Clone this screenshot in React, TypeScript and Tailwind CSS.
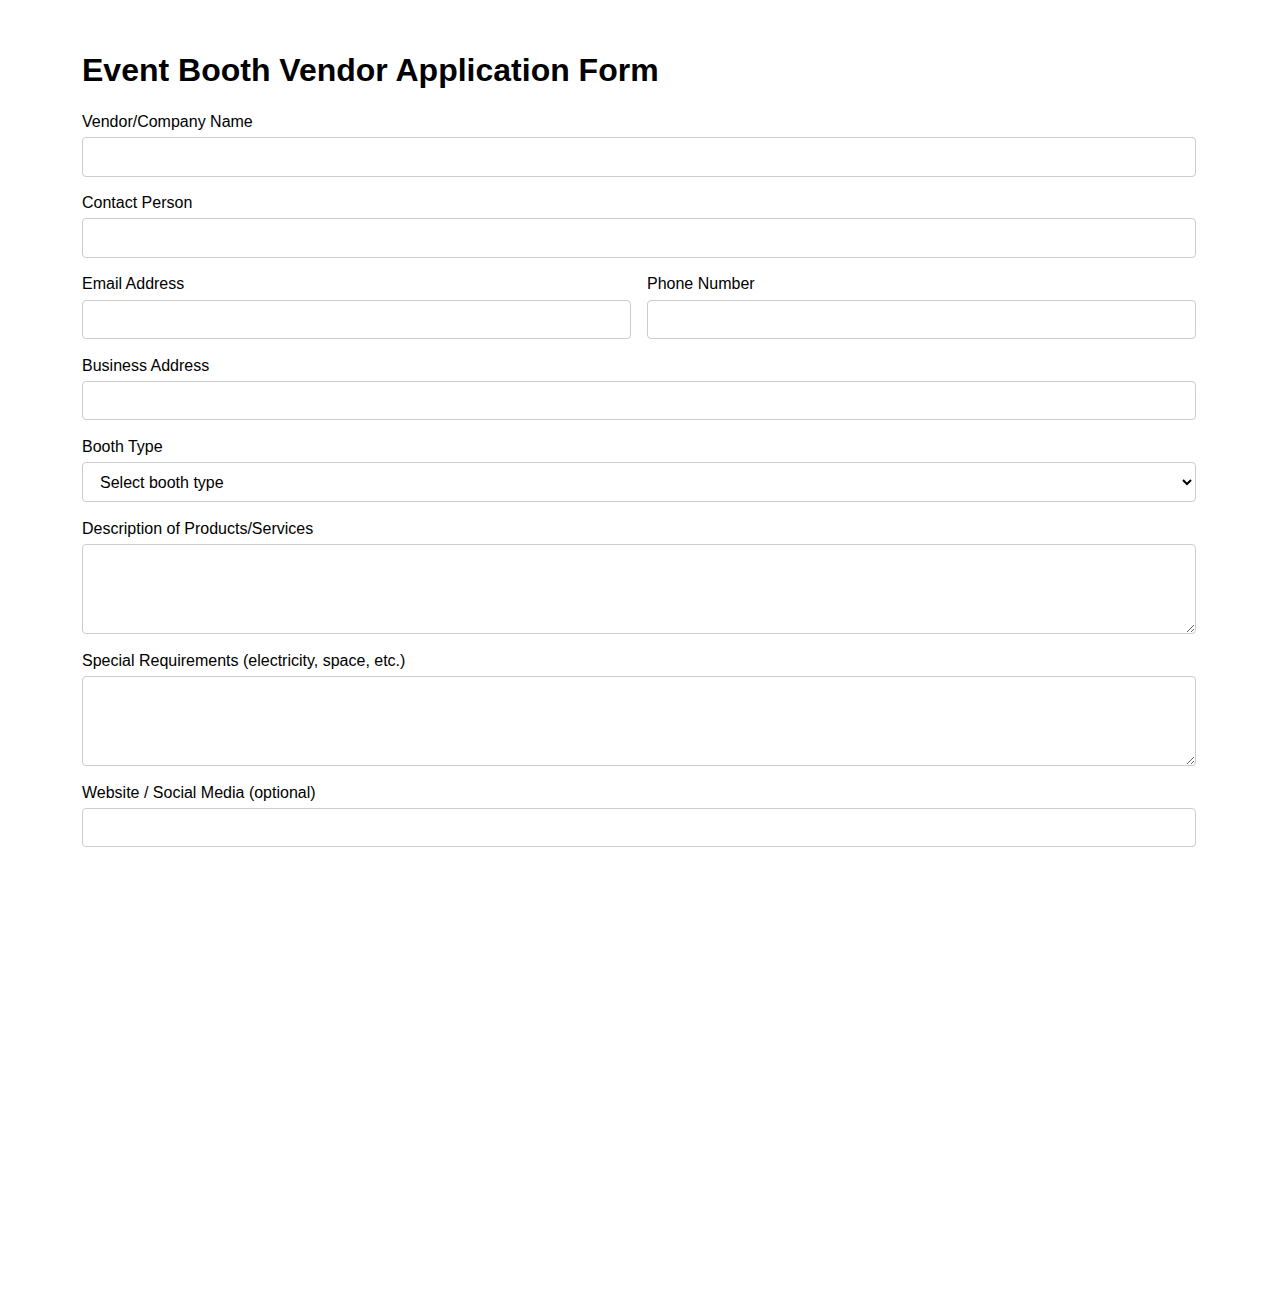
import React from 'react';

const inputClass =
  'block w-full rounded border border-[#cccccc] bg-white px-[10px] py-[9.5px] text-base leading-[18.4px] text-black outline-none';

function Field({ label, children }: { label: string; children: React.ReactNode }) {
  return (
    <div className="mb-[17.5px]">
      <label className="mb-[6px] block text-base leading-[18.4px] text-black">{label}</label>
      {children}
    </div>
  );
}

export default function App() {
  return (
    <div
      className="min-h-screen bg-white px-[82px] pt-[31px] text-black"
      style={{ fontFamily: '"Liberation Sans", Arial, sans-serif' }}
    >
      <h1 className="mt-[21.44px] mb-[23.5px] text-[32px] font-bold leading-[36.8px]">
        Event Booth Vendor Application Form
      </h1>
      <form>
        <Field label="Vendor/Company Name">
          <input type="text" className={inputClass} />
        </Field>
        <Field label="Contact Person">
          <input type="text" className={inputClass} />
        </Field>
        <div className="grid grid-cols-2 gap-4">
          <Field label="Email Address">
            <input type="email" className={inputClass} />
          </Field>
          <Field label="Phone Number">
            <input type="tel" className={inputClass} />
          </Field>
        </div>
        <Field label="Business Address">
          <input type="text" className={inputClass} />
        </Field>
        <Field label="Booth Type">
          <select className={`${inputClass} appearance-auto px-[13px]`} defaultValue="">
            <option value="">Select booth type</option>
            <option value="standard">Standard Booth</option>
            <option value="corner">Corner Booth</option>
            <option value="premium">Premium Booth</option>
          </select>
        </Field>
        <Field label="Description of Products/Services">
          <textarea className={`${inputClass} h-[90px]`} />
        </Field>
        <Field label="Special Requirements (electricity, space, etc.)">
          <textarea className={`${inputClass} h-[90px]`} />
        </Field>
        <Field label="Website / Social Media (optional)">
          <input type="text" className={inputClass} />
        </Field>
      </form>
    </div>
  );
}
